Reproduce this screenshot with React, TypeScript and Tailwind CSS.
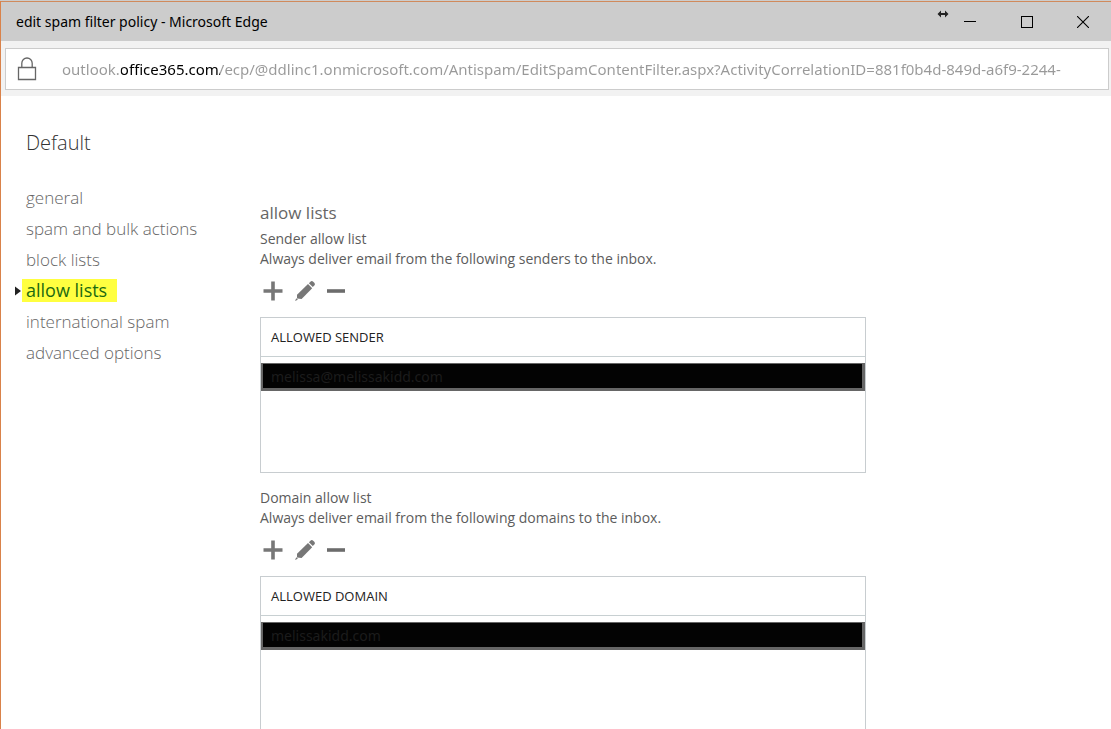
import React from 'react';
import clsx from 'clsx';

interface AllowListProps {
  title: string;
  description: string;
  column: string;
  entries: string[];
}

const NAV_ITEMS = [
  'general',
  'spam and bulk actions',
  'block lists',
  'allow lists',
  'international spam',
  'advanced options',
];

const PAGE_URL =
  'outlook.office365.com/ecp/@ddlinc1.onmicrosoft.com/Antispam/EditSpamContentFilter.aspx?ActivityCorrelationID=881f0b4d-849d-a6f9-2244-';

const LockIcon = () => (
  <svg width="20" height="26" viewBox="0 0 20 26" fill="none" stroke="#666" strokeWidth="1.3" aria-hidden="true">
    <path d="M1.5 11.5h17v12h-17z" />
    <path d="M4.8 11.5V7.2a5.2 5.2 0 0 1 10.4 0v4.3" />
  </svg>
);

const PlusIcon = () => (
  <svg width="20" height="20" viewBox="0 0 20 20" fill="#777" aria-hidden="true">
    <path d="M8.2 0.5h3.6v7.7h7.7v3.6h-7.7v7.7H8.2v-7.7H0.5V8.2h7.7z" />
  </svg>
);

const PencilIcon = () => (
  <svg width="20" height="20" viewBox="0 0 20 20" fill="#777" aria-hidden="true">
    <path d="M13 3.1l4.2 4.2L6.6 17.9 2 17.5 2 13.8z" />
    <path d="M13.9 2.2l1.5-1.5c.8-.8 2-.8 2.8 0l1.1 1.1c.8.8.8 2 0 2.8l-1.5 1.5z" />
    <path d="M1.3 17.2l1.6 1.5-2.9 1.3z" />
  </svg>
);

const MinusIcon = () => (
  <svg width="20" height="20" viewBox="0 0 20 20" fill="#6c6c6c" aria-hidden="true">
    <path d="M0 8.2h18v3.6H0z" />
  </svg>
);

const TitleBar = () => (
  <header className="flex h-10 items-center justify-between border-t border-[#d08a5c] bg-[#cccccc] pl-[15px]">
    <h1 className="font-['Noto_Sans',sans-serif] text-sm text-black">edit spam filter policy - Microsoft Edge</h1>
    <div className="flex h-full items-center">
      <svg className="mb-4 -mr-2" width="12" height="8" viewBox="0 0 12 8" fill="#222" aria-hidden="true">
        <path d="M0.5 4L4 0.5V3h4V0.5L11.5 4 8 7.5V5H4v2.5z" />
      </svg>
      <button type="button" aria-label="Minimize" className="flex h-full w-[57px] items-center justify-center">
        <svg width="12" height="12" viewBox="0 0 12 12" stroke="#000" shapeRendering="crispEdges">
          <path d="M0 5.5h12" />
        </svg>
      </button>
      <button type="button" aria-label="Maximize" className="flex h-full w-[57px] items-center justify-center">
        <svg width="12" height="12" viewBox="0 0 12 12" fill="none" stroke="#000" shapeRendering="crispEdges">
          <path d="M.5 .5h11v11H.5z" />
        </svg>
      </button>
      <button type="button" aria-label="Close" className="flex h-full w-14 items-center justify-center">
        <svg width="12" height="12" viewBox="0 0 12 12" stroke="#000" strokeWidth="1.1">
          <path d="M0 0l12 12M12 0L0 12" />
        </svg>
      </button>
    </div>
  </header>
);

const AddressBar = () => (
  <div className="bg-[#f2f2f2] pt-[7px] pr-0.5 pb-1.5 pl-1">
    <div className="flex h-[42px] items-center border border-[#cccccc] bg-white pr-4 pl-[11px]">
      <LockIcon />
      {/* the gradient paints the host name darker than the rest of the url */}
      <input
        type="text"
        aria-label="Address"
        readOnly
        value={PAGE_URL}
        className="ml-[25px] min-w-0 flex-1 bg-[linear-gradient(to_right,#999_59px,#000_59px,#000_158px,#999_158px)] bg-clip-text font-['Noto_Sans',sans-serif] text-[15px] text-transparent outline-none"
      />
    </div>
  </div>
);

const SideNav = () => (
  <nav aria-label="Policy sections">
    <ul className="text-[17px] leading-[23px] font-light text-[#666]">
      {NAV_ITEMS.map((item) => {
        const active = item === 'allow lists';
        return (
          <li key={item} className="mb-2 flex items-center">
            <svg className={clsx('mr-px', !active && 'invisible')} width="6" height="10" viewBox="0 0 6 10" fill="#222">
              <path d="M0 0.5L6 5 0 9.5z" />
            </svg>
            <a
              href="#"
              aria-current={active ? 'page' : undefined}
              className={clsx(
                'pl-1 whitespace-nowrap',
                active && 'bg-[#ffff40] pr-2.5 text-lg leading-[23px] font-normal text-[#1b6a10]',
              )}
            >
              {item}
            </a>
          </li>
        );
      })}
    </ul>
  </nav>
);

const AllowList = ({ title, description, column, entries }: AllowListProps) => (
  <section className="mb-[15px] text-sm leading-5 text-[#5c5c5c]">
    <h3>{title}</h3>
    <p>{description}</p>
    <div className="mt-3 mb-4 flex gap-3 pl-[3px]">
      <button type="button" aria-label="Add">
        <PlusIcon />
      </button>
      <button type="button" aria-label="Edit">
        <PencilIcon />
      </button>
      <button type="button" aria-label="Remove">
        <MinusIcon />
      </button>
    </div>
    <div className="h-[156px] border border-[#c8cdd0]">
      <table className="w-full border-separate border-spacing-0 text-left">
        <thead>
          <tr className="h-[39px]">
            <th className="border-b border-[#c8d0d2] p-0 pl-2.5 text-[13px] font-normal text-[#222]">{column}</th>
          </tr>
        </thead>
        <tbody>
          <tr className="h-1.5">
            <td className="p-0" />
          </tr>
          {entries.map((entry) => (
            <tr key={entry}>
              <td className="h-7 border-t border-r-[3px] border-b-[3px] border-l-2 border-[#666] bg-[#030303] p-0 pt-0.5 pl-2 font-['Noto_Sans',sans-serif] text-[#1c1c1c]">
                {entry}
              </td>
            </tr>
          ))}
        </tbody>
      </table>
    </div>
  </section>
);

const App = () => {
  return (
    <div className="h-screen overflow-hidden border-t border-t-[#cccccc] bg-white font-['Open_Sans','Noto_Sans',sans-serif]">
      <div className="flex h-full flex-col border-l border-[#d9824a]">
        <TitleBar />
        <AddressBar />
        <main className="min-h-0 flex-1 overflow-hidden pt-8 pl-3.5">
          <h2 className="pl-[11px] text-xl leading-[30px] font-light text-[#333]">Default</h2>
          <div className="flex pt-7">
            <div className="w-[245px] shrink-0">
              <SideNav />
            </div>
            <div className="max-w-[606px] flex-1 pt-[15px]">
              <h2 className="text-[17px] leading-6 text-[#666]">allow lists</h2>
              <div className="pt-1">
                <AllowList
                  title="Sender allow list"
                  description="Always deliver email from the following senders to the inbox."
                  column="ALLOWED SENDER"
                  entries={['melissa@melissakidd.com']}
                />
                <AllowList
                  title="Domain allow list"
                  description="Always deliver email from the following domains to the inbox."
                  column="ALLOWED DOMAIN"
                  entries={['melissakidd.com']}
                />
              </div>
            </div>
          </div>
        </main>
      </div>
    </div>
  );
};

export default App;
